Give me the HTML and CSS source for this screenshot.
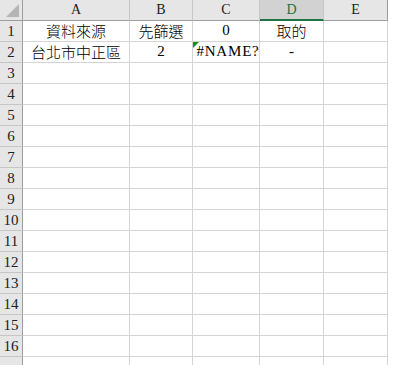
FILE: index.html
```html
<!DOCTYPE html>
<html>
<head>
    <title>工作表</title>
    <link rel="stylesheet" href="styles.css">
</head>
<body>
    <div class="sheet">
        <div class="corner"><span class="corner-tri"></span></div>
        <div class="col-head">A</div>
        <div class="col-head">B</div>
        <div class="col-head">C</div>
        <div class="col-head active">D</div>
        <div class="col-head last">E</div>

        <div class="row-head">1</div>
        <div class="cell">資料來源</div>
        <div class="cell">先篩選</div>
        <div class="cell num">0</div>
        <div class="cell">取的</div>
        <div class="cell"></div>

        <div class="row-head">2</div>
        <div class="cell">台北市中正區</div>
        <div class="cell num">2</div>
        <div class="cell num err"><span class="flag"></span>#NAME?</div>
        <div class="cell num">-</div>
        <div class="cell"></div>

        <div class="row-head">3</div><div class="cell"></div><div class="cell"></div><div class="cell"></div><div class="cell"></div><div class="cell"></div>
        <div class="row-head">4</div><div class="cell"></div><div class="cell"></div><div class="cell"></div><div class="cell"></div><div class="cell"></div>
        <div class="row-head">5</div><div class="cell"></div><div class="cell"></div><div class="cell"></div><div class="cell"></div><div class="cell"></div>
        <div class="row-head">6</div><div class="cell"></div><div class="cell"></div><div class="cell"></div><div class="cell"></div><div class="cell"></div>
        <div class="row-head">7</div><div class="cell"></div><div class="cell"></div><div class="cell"></div><div class="cell"></div><div class="cell"></div>
        <div class="row-head">8</div><div class="cell"></div><div class="cell"></div><div class="cell"></div><div class="cell"></div><div class="cell"></div>
        <div class="row-head">9</div><div class="cell"></div><div class="cell"></div><div class="cell"></div><div class="cell"></div><div class="cell"></div>
        <div class="row-head">10</div><div class="cell"></div><div class="cell"></div><div class="cell"></div><div class="cell"></div><div class="cell"></div>
        <div class="row-head">11</div><div class="cell"></div><div class="cell"></div><div class="cell"></div><div class="cell"></div><div class="cell"></div>
        <div class="row-head">12</div><div class="cell"></div><div class="cell"></div><div class="cell"></div><div class="cell"></div><div class="cell"></div>
        <div class="row-head">13</div><div class="cell"></div><div class="cell"></div><div class="cell"></div><div class="cell"></div><div class="cell"></div>
        <div class="row-head">14</div><div class="cell"></div><div class="cell"></div><div class="cell"></div><div class="cell"></div><div class="cell"></div>
        <div class="row-head">15</div><div class="cell"></div><div class="cell"></div><div class="cell"></div><div class="cell"></div><div class="cell"></div>
        <div class="row-head">16</div><div class="cell"></div><div class="cell"></div><div class="cell"></div><div class="cell"></div><div class="cell"></div>
        <div class="row-head"></div><div class="cell"></div><div class="cell"></div><div class="cell"></div><div class="cell"></div><div class="cell"></div>
    </div>
</body>
</html>
```

FILE: styles.css
```css
html, body { margin: 0; padding: 0; background: #fff; overflow: hidden; }
body { width: 393px; height: 365px; }

.sheet {
    display: grid;
    grid-template-columns: 23px 107px 63px 67px 64px 64px;
    grid-auto-rows: 21px;
    font-family: "Noto Sans CJK TC", "Liberation Serif", serif;
    font-size: 15px;
    font-weight: 300;
    color: #000;
}

.corner, .col-head, .row-head, .cell {
    box-sizing: border-box;
    display: flex;
    align-items: center;
    justify-content: center;
    overflow: visible;
    white-space: nowrap;
}

.corner {
    background: #e6e6e6;
    border-right: 1px solid #9e9e9e;
    border-bottom: 1px solid #9e9e9e;
    position: relative;
}
.corner-tri {
    position: absolute;
    right: 3px;
    bottom: 3px;
    width: 13px;
    height: 13px;
    background: #b5b5b5;
    clip-path: polygon(100% 0, 100% 100%, 0 100%);
}

.col-head {
    background: #e6e6e6;
    border-right: 1px solid #c6c6c6;
    border-bottom: 1px solid #9e9e9e;
    font-family: "Liberation Serif", serif;
    font-weight: 400;
    font-size: 14px;
    color: #222;
}
.col-head.active {
    background: #d2d2d2;
    color: #217346;
    border-bottom: 2px solid #217346;
}
.col-head.last { border-right-color: #9e9e9e; }

.row-head {
    background: #e6e6e6;
    border-right: 1px solid #9e9e9e;
    border-bottom: 1px solid #c6c6c6;
    font-family: "Liberation Serif", serif;
    font-weight: 400;
    font-size: 15px;
    color: #222;
}

.cell {
    border-right: 1px solid #d4d4d4;
    border-bottom: 1px solid #d4d4d4;
    padding-bottom: 1px;
}
.num { font-family: "Liberation Serif", serif; font-weight: 400; font-size: 15px; }
.err { position: relative; padding-left: 4px; letter-spacing: 0.8px; }
.flag {
    position: absolute;
    left: 0;
    top: 0;
    width: 6px;
    height: 6px;
    background: #1d8a1d;
    clip-path: polygon(0 0, 100% 0, 0 100%);
}
```
